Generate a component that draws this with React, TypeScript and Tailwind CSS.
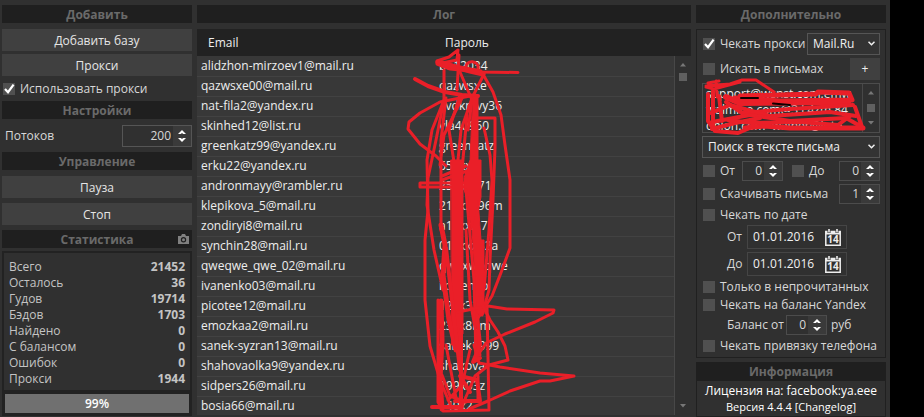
import React from "react";

const rows: [string, string][] = [
  ["alidzhon-mirzoev1@mail.ru", "b612034"],
  ["qazwsxe00@mail.ru", "qazwsxe"],
  ["nat-fila2@yandex.ru", "Tvdkmvy36"],
  ["skinhed12@list.ru", "vla40960"],
  ["greenkatz99@yandex.ru", "greenkatz"],
  ["erku22@yandex.ru", "65xxxx"],
  ["andronmayy@rambler.ru", "25xxxx71"],
  ["klepikova_5@mail.ru", "21xxxx96m"],
  ["zondiryi8@mail.ru", "a1xxxx.7"],
  ["synchin28@mail.ru", "01xxxx32a"],
  ["qweqwe_qwe_02@mail.ru", "qwxxweqwe"],
  ["ivanenko03@mail.ru", "ixxxenko"],
  ["picotee12@mail.ru", "12xx32"],
  ["emozkaa2@mail.ru", "23xx8bm"],
  ["sanek-syzran13@mail.ru", "sanek1999"],
  ["shahovaolka9@yandex.ru", "shaxova"],
  ["sidpers26@mail.ru", "199x03z"],
  ["bosia66@mail.ru", "140x2"],
];

const stats: [string, string][] = [
  ["Всего", "21452"],
  ["Осталось", "36"],
  ["Гудов", "19714"],
  ["Бэдов", "1703"],
  ["Найдено", "0"],
  ["С балансом", "0"],
  ["Ошибок", "0"],
  ["Прокси", "1944"],
];

function Heading({ children }: { children: React.ReactNode }) {
  return (
    <h2 className="flex h-[18px] shrink-0 items-center justify-center bg-[#1f1f1f] pt-[2px] font-bold text-[#6a6a6a]">
      {children}
    </h2>
  );
}

function WideButton({ children }: { children: React.ReactNode }) {
  return (
    <button type="button" className="h-[22px] w-full shrink-0 bg-[#404040] pt-[2px] text-[#e6e6e6]">
      {children}
    </button>
  );
}

function Check({ label, checked = false }: { label: string; checked?: boolean }) {
  return (
    <label className="flex items-center gap-[5px] whitespace-nowrap">
      <span className="relative flex size-3">
        <input
          type="checkbox"
          defaultChecked={checked}
          className="peer size-3 appearance-none bg-[#505050]"
        />
        <svg
          viewBox="0 0 12 12"
          className="pointer-events-none absolute inset-0 hidden size-3 peer-checked:block"
          fill="none"
          stroke="#fff"
          strokeWidth="2.2"
        >
          <path d="M2 6 L5 9.2 L10.6 1.6" />
        </svg>
      </span>
      {label}
    </label>
  );
}

function Spinner({ label, value, large = false }: { label: string; value: string; large?: boolean }) {
  return (
    <span
      className={
        large
          ? "flex h-[22px] w-[70px] border border-[#555]"
          : "flex h-5 w-[41px] border border-[#4c4c4c]"
      }
    >
      <input
        aria-label={label}
        defaultValue={value}
        className="w-0 min-w-0 flex-1 bg-transparent pr-[2px] text-right outline-none"
      />
      <span className="flex w-[18px] flex-col bg-[#3a3a3a]">
        <button type="button" aria-label={label + " +"} className="flex flex-1 items-end justify-center pb-[2px]">
          <svg width="8" height="4" viewBox="0 0 8 4" fill="#fff">
            <path d="M4 0 L8 4 H5.2 L4 3 L2.8 4 H0Z" />
          </svg>
        </button>
        <button type="button" aria-label={label + " −"} className="flex flex-1 items-start justify-center pt-[2px]">
          <svg width="8" height="4" viewBox="0 0 8 4" fill="#fff">
            <path d="M4 4 L8 0 H5.2 L4 1 L2.8 0 H0Z" />
          </svg>
        </button>
      </span>
    </span>
  );
}

function Dropdown({ label, value, className }: { label: string; value: string; className: string }) {
  return (
    <span className={"relative flex h-[22px] " + className}>
      <select
        aria-label={label}
        className="w-full appearance-none border border-[#555] bg-[#333] pl-[5px] text-[#f0f0f0] outline-none"
      >
        <option>{value}</option>
      </select>
      <svg
        className="pointer-events-none absolute top-2 right-[5px]"
        width="7"
        height="5"
        viewBox="0 0 7 5"
        fill="none"
        stroke="#f0f0f0"
        strokeWidth="1.5"
      >
        <path d="M0.5 0.8 L3.5 3.8 L6.5 0.8" />
      </svg>
    </span>
  );
}

function DateField({ label, id }: { label: string; id: string }) {
  return (
    <div className="flex h-6 items-center pl-[25px]">
      <label htmlFor={id} className="w-5">
        {label}
      </label>
      <span className="flex h-6 w-[100px] items-center border border-[#454545] pr-[5px]">
        <input
          id={id}
          defaultValue="01.01.2016"
          className="w-0 min-w-0 flex-1 bg-transparent pl-[5px] text-[#f0f0f0] outline-none"
        />
        <button type="button" aria-label={"Календарь " + label}>
          <svg width="16" height="17" viewBox="0 0 16 17">
            <path d="M0.8 2.5 H15.2 V16.2 H0.8 Z" fill="none" stroke="#eee" strokeWidth="1.5" />
            <path d="M0.5 2 H15.5 V5.5 H0.5Z" fill="#eee" />
            <path d="M4 0 V4 M12 0 V4" stroke="#333" strokeWidth="3" />
            <path d="M4 0 V3.5 M12 0 V3.5" stroke="#eee" strokeWidth="1.6" />
            <text x="8" y="14" textAnchor="middle" fontSize="10" fontWeight="700" fill="#eee">
              14
            </text>
          </svg>
        </button>
      </span>
    </div>
  );
}

function Arrow({ down = false }: { down?: boolean }) {
  return (
    <svg width="6" height="4" viewBox="0 0 6 4" fill="#777">
      <path d={down ? "M0 0 H6 L3 3.5Z" : "M0 3.5 H6 L3 0Z"} />
    </svg>
  );
}

function LogMarks() {
  return (
    <svg
      className="pointer-events-none absolute top-0 left-[203px]"
      width="200"
      height="417"
      viewBox="400 0 200 417"
      fill="none"
      stroke="#ea1f28"
      strokeWidth="3"
      strokeLinecap="round"
      strokeLinejoin="round"
    >
      <path d="M458 50 L449 57 L437 61 L437 64 L450 69 L480 72 L518 72.5 M458 50 L457 60 L442 63 L460 67 L481 71" />
      <path d="M466 68 C465 59 480 60 478 69" />
      <path d="M438 62 L452 66 L470 71 L483 74" strokeWidth="5" />
      <path d="M415 79 L428 86 L445 92 L462 95 L478 96" strokeWidth="4" />
      <path d="M470 96 L440 102 L420 113 L409 122 L408 129 L420 144 L436 156 L446 166" />
      <path d="M444 70 V100 L436 140 L428 178 L427 205 L434 250 L443 290 M459 55 L457 90" />
      <path d="M444 100 L432 130 L427 160 L428 210 L425 240 V300 L430 346 L440 380 L450 404" />
      <path d="M460 72 L472 100 L468 130 M484 74 L472 98 L461 130 L458 160 M460 95 L449 130 L454 162" />
      <path d="M484 76 L493 92 L501 115 L505 145 L510 180 V248 L502 270 L492 296 L478 318" />
      <path d="M446 98 L441 140 L441 230 M463 96 L444 135 L440 165" />
      <path d="M478 118 H495 V148 L493 200 L490 260 L489 290 L482 315" />
      <path d="M484 128 L490 155 L492 180 L489 230 L484 290" />
      <path d="M470 187 L420 187 L420 183 H476 M442 176 L466 166 M442 180 L470 170" />
      <path d="M451 160 H463 V334 H460 L458 345 H452 Z" fill="#ea1f28" strokeWidth="1" />
      <path d="M473 96 H478 V160 H481 V197 L476 222 L471 230 L468 200 L464 190 V178 L470 160 Z" fill="#ea1f28" strokeWidth="1" />
      <path d="M478 200 L481 240 H484 V314 H476 L474 260 L472 230 Z" fill="#ea1f28" strokeWidth="1" />
      <path d="M466 190 L474 280 L476 360 M467 115 L462 170 M466 230 L470 300 L480 355" />
      <path d="M441 225 L445 245 L443 275 L449 320 L456 350" strokeWidth="5" />
      <path d="M441 301 L442 340 L440 380 L442 409" strokeWidth="5" />
      <path d="M446 248 L452 300 L460 370 M461 330 V409" strokeWidth="4" />
      <path d="M438 300 V402 L443 411 L489 410 L487 306" />
      <path d="M458 312 L488 306 L507 309 L554 310 L553 313 L535 322 L505 334 L486 343 L476 358" />
      <path d="M483 306 L490 320 L498 332 L505 346 L508 360 L489 365 L475 376 L462 406" />
      <path d="M474 345 L479 363 L500 367 L540 373 L574 376 L550 381 L540 381 L510 391 L488 401 L469 409" />
      <path d="M432 407 H462 M455 401 H480 L477 380 L460 376 L470 392" strokeWidth="4" />
      <path d="M477 315 L480 345 L473 362 L480 358" strokeWidth="4" />
      <path d="M442 375 L450 396 L466 402 M446 345 L456 398 M470 350 L462 385 L448 400 M478 376 V400" />
    </svg>
  );
}

function FilterMarks() {
  return (
    <svg
      className="pointer-events-none absolute -top-[6px] -left-px"
      width="168"
      height="58"
      viewBox="702 77 168 58"
      fill="none"
      stroke="#ea1f28"
      strokeWidth="3"
      strokeLinecap="round"
      strokeLinejoin="round"
    >
      <path d="M708 82 L719 80 M706 85 L730 83 L742 79 L756 79 L774 91 M706 86 L714 88 L740 81 M716 80 L717 96" />
      <path d="M708 93 V120 L715 130 L738 132 L752 126 M713 90 V128 M719 95 L722 120" strokeWidth="4" />
      <path d="M740 95 L816 93 L818 91 L849 92 L852 99 L780 100 L735 97" strokeWidth="5" />
      <path d="M726 96 L740 102 L848 101" strokeWidth="6" />
      <path d="M726 101 L742 112 L790 108 L853 104" strokeWidth="4" />
      <path d="M711 112 L730 104 L770 115 L830 111 L856 115" strokeWidth="4" />
      <path d="M712 121 L750 114 L790 120 L846 117 L862 126 L855 106" strokeWidth="4" />
      <path d="M745 127 L764 125 L790 127 L863 127" strokeWidth="5" />
      <path d="M728 119 L752 122 L800 121 L838 124 L850 115 M712 128 L735 122 L760 117" strokeWidth="4" />
      <path d="M741 97 H758 M773 102.5 L790 104" stroke="#100000" strokeWidth="2" />
    </svg>
  );
}

export default function App() {
  return (
    <div className="min-h-screen bg-black pr-[34px] font-['Open_Sans','Noto_Sans',sans-serif] text-[12px] leading-4 text-[#d8d8d8]">
      <main className="flex min-h-[417px] gap-[5px] bg-[#303030] pr-1 pl-[2px]">
        <aside className="flex w-[190px] shrink-0 flex-col pt-[5px]">
          <Heading>Добавить</Heading>
          <div className="flex flex-col gap-[3px] pt-[6px]">
            <WideButton>Добавить базу</WideButton>
            <WideButton>Прокси</WideButton>
          </div>
          <div className="flex h-[25px] items-center pl-px">
            <Check label="Использовать прокси" checked />
          </div>
          <Heading>Настройки</Heading>
          <div className="flex h-[33px] items-center justify-between pl-[3px]">
            <span>Потоков</span>
            <Spinner label="Потоков" value="200" large />
          </div>
          <Heading>Управление</Heading>
          <div className="flex flex-col gap-[5px] pt-[6px] pb-[5px]">
            <WideButton>Пауза</WideButton>
            <WideButton>Стоп</WideButton>
          </div>
          <div className="relative">
            <Heading>Статистика</Heading>
            <button type="button" aria-label="Снимок" className="absolute top-1 right-[3px]">
              <svg width="11" height="10" viewBox="0 0 11 10">
                <path
                  fillRule="evenodd"
                  fill="#808080"
                  d="M0 2 H3 L4 0 H7 L8 2 H11 V10 H0Z M5.5 3 A2.7 2.7 0 1 0 5.5 8.4 A2.7 2.7 0 1 0 5.5 3Z"
                />
                <circle cx="5.5" cy="5.7" r="1.5" fill="#808080" />
              </svg>
            </button>
          </div>
          <dl className="mt-[3px] border-2 border-[#222] px-[5px] pt-[6px] pb-[3px] text-[#c4c4c4]">
            {stats.map(([name, value]) => (
              <div key={name} className="flex justify-between">
                <dt>{name}</dt>
                <dd className="font-bold">{value}</dd>
              </div>
            ))}
          </dl>
          <div className="border-[3px] border-t-2 border-[#222]">
            <div
              role="progressbar"
              aria-label="Прогресс"
              aria-valuenow={99}
              className="flex h-[19px] items-center justify-center bg-[#707070] font-semibold text-white"
            >
              99%
            </div>
          </div>
        </aside>

        <section className="relative flex min-w-0 flex-1 flex-col pt-[5px]">
          <Heading>Лог</Heading>
          <div className="mt-[6px] flex h-[386px] overflow-hidden bg-[#383838]">
            <table className="h-fit w-full table-fixed border-collapse text-left text-[#eee]">
              <thead>
                <tr className="h-[27px] bg-[#222]">
                  <th className="w-[238px] p-0 pl-[11px] font-normal">Email</th>
                  <th className="p-0 pl-[10px] font-normal">Пароль</th>
                </tr>
              </thead>
              <tbody>
                {rows.map(([email, pass]) => (
                  <tr key={email} className="h-5 border-b border-[#424242]">
                    <td className="p-0 pl-1">{email}</td>
                    <td className="p-0 pl-1">{pass}</td>
                  </tr>
                ))}
              </tbody>
            </table>
            <div className="flex w-[17px] shrink-0 flex-col bg-[#303030]">
              <div className="h-[27px] bg-[#222]" />
              <div className="flex flex-1 flex-col items-center border-l border-[#484848] py-[7px]">
                <Arrow />
                <div className="mt-[6px] size-2 bg-[#606060]" />
                <div className="mt-auto flex">
                  <Arrow down />
                </div>
              </div>
            </div>
          </div>
          <LogMarks />
        </section>

        <aside className="flex w-[190px] shrink-0 flex-col pt-[5px]">
          <Heading>Дополнительно</Heading>
          <div className="mt-[6px] flex flex-col border border-[#202020] px-[5px] pt-[3px] pb-px">
            <div className="flex h-[22px] items-center justify-between pl-px">
              <Check label="Чекать прокси" checked />
              <Dropdown label="Почта" value="Mail.Ru" className="w-[73px]" />
            </div>
            <div className="mt-[3px] flex h-[22px] items-center justify-between pl-px">
              <Check label="Искать в письмах" />
              <button type="button" className="h-[22px] w-[30px] bg-[#404040] text-[#eee]">
                +
              </button>
            </div>
            <div className="relative mt-[3px] flex h-[50px] border border-[#4c4c4c]">
              <textarea
                aria-label="Запросы"
                className="w-0 min-w-0 flex-1 resize-none overflow-hidden bg-transparent pt-[2px] pl-[3px] whitespace-pre text-[#eee] outline-none"
                defaultValue={"support@wsnst.com.emw\nwalmine.com@3.l.4zm.84\nonion.com  walner@loto"}
              />
              <div className="flex w-[17px] flex-col items-center justify-between border-l border-[#484848] py-[7px]">
                <Arrow />
                <div className="size-2 bg-[#606060]" />
                <Arrow down />
              </div>
              <FilterMarks />
            </div>
            <Dropdown label="Где искать" value="Поиск в тексте письма" className="mt-[3px] w-full" />
            <div className="mt-[3px] flex h-5 items-center pl-px">
              <div className="w-[39px]">
                <Check label="От" />
              </div>
              <Spinner label="От" value="0" />
              <div className="ml-[9px] flex-1">
                <Check label="До" />
              </div>
              <Spinner label="До" value="0" />
            </div>
            <div className="mt-[3px] flex h-5 items-center justify-between pl-px">
              <Check label="Скачивать письма" />
              <Spinner label="Скачивать письма" value="1" />
            </div>
            <div className="flex h-[21px] items-center pl-px">
              <Check label="Чекать по дате" />
            </div>
            <div className="flex flex-col gap-[3px]">
              <DateField label="От" id="date-from" />
              <DateField label="До" id="date-to" />
            </div>
            <div className="mt-[2px] flex h-[18px] items-center pl-px">
              <Check label="Только в непрочитанных" />
            </div>
            <div className="flex h-[18px] items-center pl-px">
              <Check label="Чекать на баланс Yandex" />
            </div>
            <div className="flex h-[22px] items-center pl-[25px]">
              <span className="w-[59px] whitespace-nowrap">Баланс от</span>
              <Spinner label="Баланс от" value="0" />
              <span className="pl-1">руб</span>
            </div>
            <div className="flex h-5 items-center pl-px">
              <Check label="Чекать привязку телефона" />
            </div>
          </div>
          <div className="mt-1">
            <Heading>Информация</Heading>
          </div>
          <div className="flex flex-1 flex-col items-center border border-[#202020] pt-[2px] text-white">
            <p>Лицензия на: facebook:ya.eee</p>
            <p className="text-[11px]">Версия 4.4.4 [Changelog]</p>
          </div>
        </aside>
      </main>
    </div>
  );
}
